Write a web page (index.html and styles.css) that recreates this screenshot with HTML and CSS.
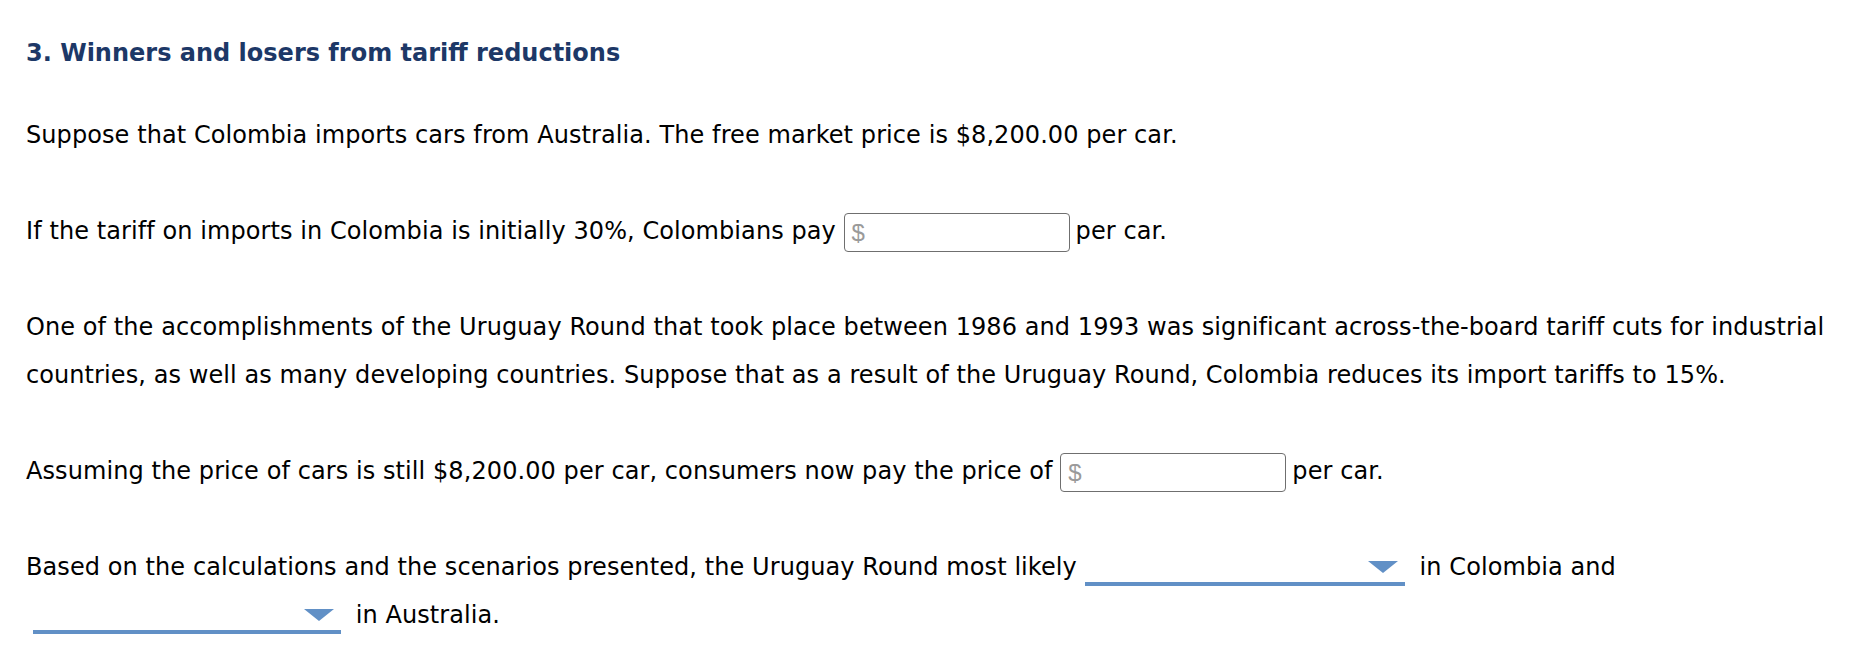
FILE: index.html
```html
<!DOCTYPE html>
<html lang="en">
<head>
<meta charset="utf-8">
<title>Winners and losers from tariff reductions</title>
<link rel="stylesheet" href="styles.css">
</head>
<body>
<main class="question">
  <h2 class="title">3. Winners and losers from tariff reductions</h2>
  <p class="para">Suppose that Colombia imports cars from Australia. The free market price is $8,200.00 per car.</p>
  <p class="para">If the tariff on imports in Colombia is initially 30%, Colombians pay <span class="money"><span class="dollar">$</span></span>per car.</p>
  <p class="para">One of the accomplishments of the Uruguay Round that took place between 1986 and 1993 was significant across-the-board tariff cuts for industrial countries, as well as many developing countries. Suppose that as a result of the Uruguay Round, Colombia reduces its import tariffs to 15%.</p>
  <p class="para">Assuming the price of cars is still $8,200.00 per car, consumers now pay the price of <span class="money"><span class="dollar">$</span></span>per car.</p>
  <p class="para">Based on the calculations and the scenarios presented, the Uruguay Round most likely<span class="dropdown dropdown-wide"><span class="caret"></span></span> in Colombia and <span class="dropdown dropdown-narrow"><span class="caret"></span></span> in Australia.</p>
</main>
</body>
</html>
```

FILE: styles.css
```css
body {
  margin: 0;
  background: #ffffff;
}

.question {
  padding: 0 0 0 26px;
  width: 1840px;
  font-family: "DejaVu Sans", Verdana, sans-serif;
  font-size: 24px;
  letter-spacing: 0.08px;
  color: #000000;
}

.title {
  margin: 38px 0 43px;
  line-height: 30px;
  font-size: 24px;
  font-weight: bold;
  letter-spacing: 0;
  color: #1d3867;
}

.para {
  margin: 0 0 48px;
  line-height: 48px;
}

.money {
  display: inline-block;
  box-sizing: border-box;
  width: 226px;
  height: 39px;
  margin-right: 6px;
  padding: 0 7px;
  border: 1px solid #6f6f6f;
  border-radius: 4px;
  vertical-align: middle;
  line-height: 37px;
}

.dollar {
  font-family: "Liberation Sans", Arial, sans-serif;
  font-size: 24px;
  color: #9a9a9a;
}

.dropdown {
  display: inline-block;
  position: relative;
  box-sizing: border-box;
  height: 36px;
  margin: 0 7px;
  border-bottom: 4px solid #6190c6;
  vertical-align: middle;
}

.dropdown-wide {
  width: 320px;
  margin-left: 8px;
}

.dropdown-narrow {
  width: 308px;
}

.caret {
  position: absolute;
  right: 7px;
  bottom: 9px;
  width: 0;
  height: 0;
  border-left: 15px solid transparent;
  border-right: 15px solid transparent;
  border-top: 12px solid #6190c6;
}
```
